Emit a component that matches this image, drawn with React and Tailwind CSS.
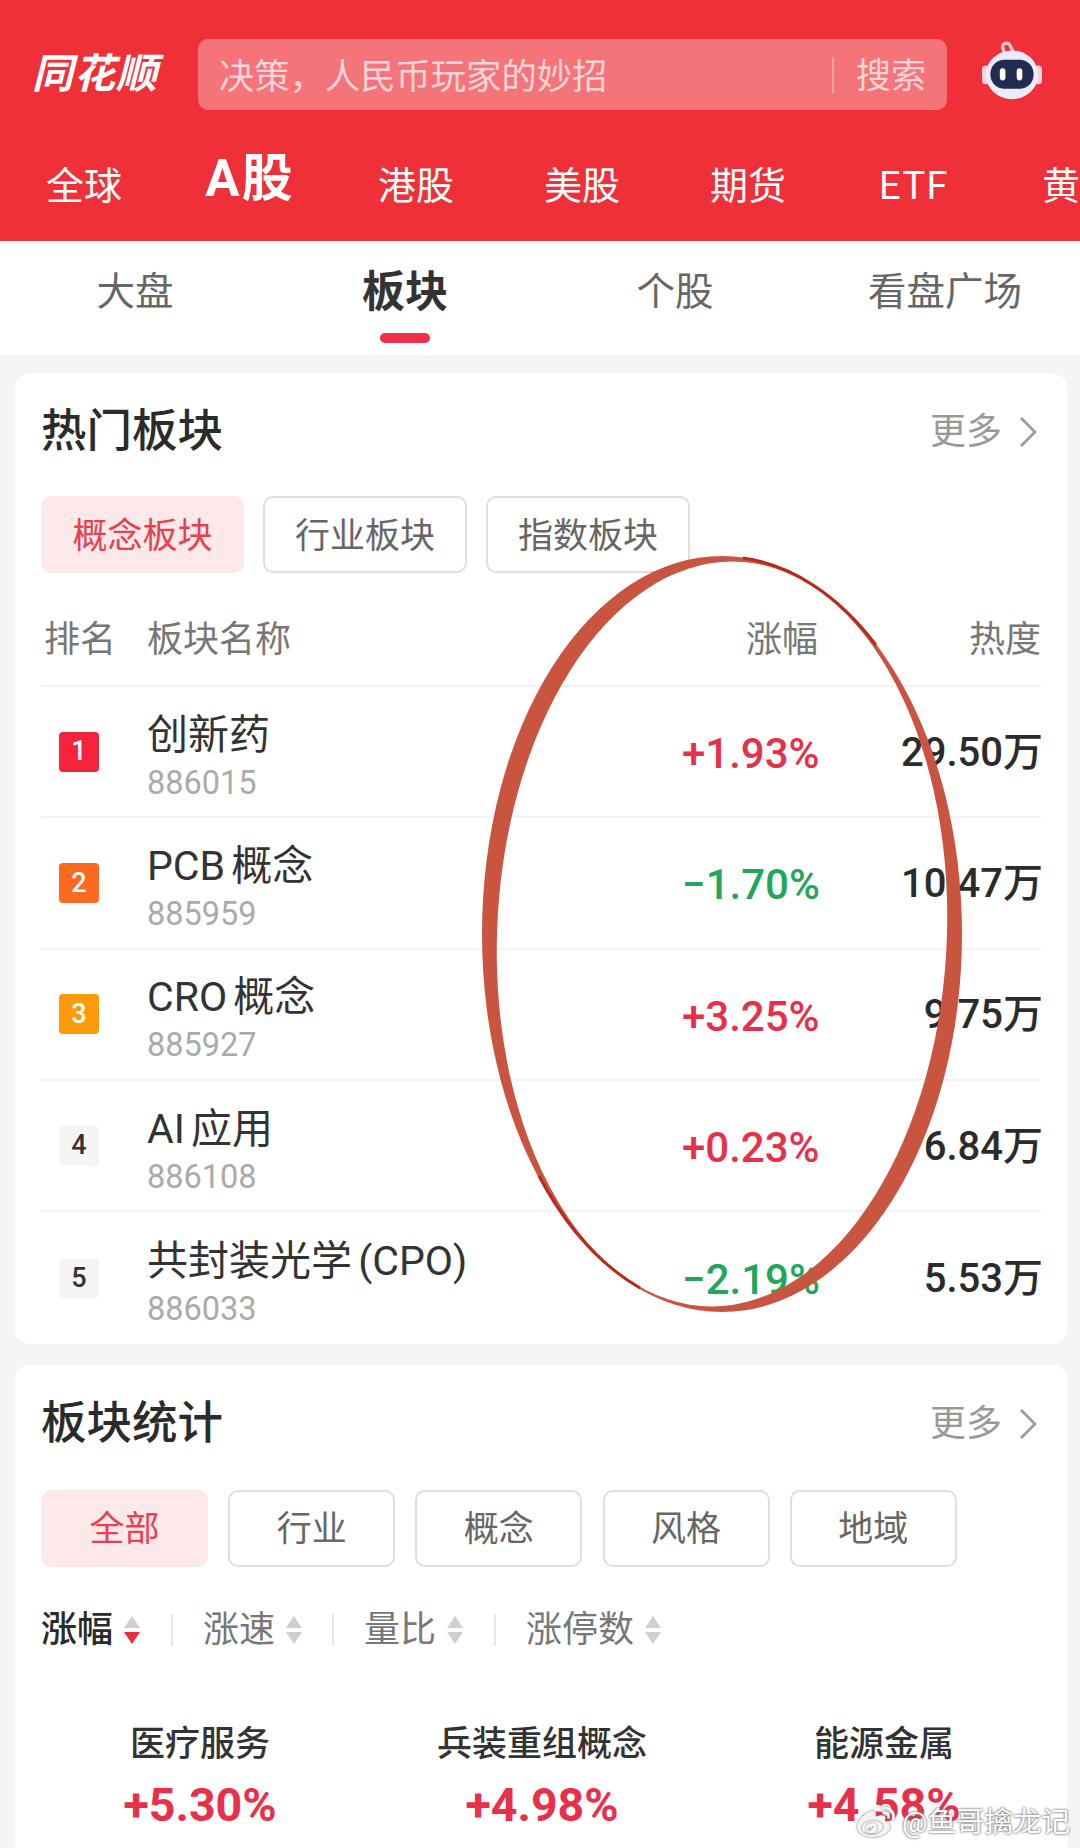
import React from "react";
import { FaWeibo } from "react-icons/fa";

const nav = [["全球",0],["A股",1],["港股",0],["美股",0],["期货",0],["ETF",0],["黄金",0]];
const tabs = [["大盘",0],["板块",1],["个股",0],["看盘广场",0]];
const rows = [
  ["1","创新药","886015","+1.93%","29.50万","bg-[#f5243a] text-white",1],
  ["2","PCB 概念","885959","−1.70%","10.47万","bg-[#fb6a1e] text-white",0],
  ["3","CRO 概念","885927","+3.25%","9.75万","bg-[#ff9b0a] text-white",1],
  ["4","AI 应用","886108","+0.23%","6.84万","bg-[#f5f5f5] text-[#333]",1],
  ["5","共封装光学 (CPO)","886033","−2.19%","5.53万","bg-[#f5f5f5] text-[#333]",0],
];

function More() {
  return (
    <div className="flex items-center pr-[3px] text-[36px] text-[#999] leading-none">
      <span>更多</span>
      <svg className="ml-[16px]" width="20" height="32" viewBox="0 0 20 32" fill="none" stroke="#999" strokeWidth="2.6">
        <path d="M3 2 L17 16 L3 30" />
      </svg>
    </div>
  );
}

function Pill({ children, active, w, shift }) {
  return (
    <div className={`h-[77px] rounded-[10px] flex items-center justify-center text-[35px] ${w} ${shift} ${active ? "bg-[#fde8ea] text-[#e8404f]" : "bg-white border-2 border-[#dedede] text-[#666]"}`}>
      {children}
    </div>
  );
}

function Sort({ active }) {
  return (
    <svg className="ml-[10px]" width="18" height="30" viewBox="0 0 18 30">
      <path d="M9 1 L17 13 L1 13 Z" fill="#cfcfcf" />
      <path d="M9 29 L17 17 L1 17 Z" fill={active ? "#ee2b3c" : "#cfcfcf"} />
    </svg>
  );
}

function Robot() {
  return (
    <svg width="62" height="60" viewBox="0 0 66 64">
      <path d="M24 10 C20 2 29 0 31 5 L34 11" fill="none" stroke="#f6c9cc" strokeWidth="3.5" strokeLinecap="round" />
      <rect x="1" y="26" width="8" height="20" rx="4" fill="#f3d3e0" />
      <rect x="57" y="26" width="8" height="20" rx="4" fill="#f3d3e0" />
      <ellipse cx="33" cy="36" rx="28" ry="26" fill="#ecebfa" />
      <rect x="10" y="20" width="46" height="31" rx="15" fill="#222b50" />
      <rect x="20" y="29" width="6" height="13" rx="3" fill="#fff" />
      <rect x="38" y="29" width="6" height="13" rx="3" fill="#fff" />
    </svg>
  );
}

export default function App() {
  return (
    <div className="relative w-[1080px] h-[1848px] overflow-hidden bg-[#f5f5f5] font-['Roboto','Noto_Sans_CJK_SC',sans-serif] text-[#333]">
      <header className="h-[241px] overflow-hidden bg-[#ef3038] text-white">
        <div className="flex items-center pt-[39px] h-[110px]">
          <div className="w-[198px] pl-[32px] text-[41px] font-bold italic leading-none tracking-[1px]">同花顺</div>
          <div className="w-[749px] h-[71px] rounded-[10px] bg-[#f5747a] flex items-center pl-[21px] pr-[21px] pt-[5px] text-[35.3px] text-[#fbd5d7]">
            <span className="flex-1">决策，人民币玩家的妙招</span>
            <span className="w-[2px] h-[36px] bg-[#f9a3a7] mr-[22px] -mt-[5px]"></span>
            <span className="text-[35px]">搜索</span>
          </div>
          <div className="ml-[34px] -mt-[8px]"><Robot /></div>
        </div>
        <nav className="flex pl-[1px] pt-[55px]">
          {nav.map(([t, a]) => (
            <div key={t} className={`w-[166px] shrink-0 text-center whitespace-nowrap leading-none ${a ? "text-[51px] font-bold tracking-[2px] -mt-[12px]" : t === "ETF" ? "text-[38px] tracking-[1.5px] pt-[2px]" : "text-[38px] pt-[2px]"}`}>{t}</div>
          ))}
        </nav>
      </header>

      <div className="h-[114px] bg-white flex">
        {tabs.map(([t, a]) => (
          <div key={t} className="w-[271px] flex flex-col items-center pt-[28px]">
            <span className={`leading-[46px] h-[46px] ${a ? "text-[43px] font-bold text-[#333]" : "text-[38.5px] text-[#666]"}`}>{t}</span>
            {a ? <span className="mt-[18px] w-[50px] h-[10px] rounded-[5px] bg-[#f0304a]"></span> : null}
          </div>
        ))}
      </div>

      <main className="pt-[19px] px-[15px]">
        <section className="bg-white rounded-[14px] w-[1052px] h-[970px] px-[26px]">
          <div className="flex items-center justify-between h-[122px] pb-[6px]">
            <h2 className="text-[45.5px] font-medium text-[#2b2b2b]">热门板块</h2>
            <More />
          </div>
          <div className="flex gap-[19px]">
            <Pill active w="w-[203px]" shift="pt-[6px]">概念板块</Pill>
            <Pill w="w-[204px]" shift="pt-[6px]">行业板块</Pill>
            <Pill w="w-[204px]" shift="pt-[6px]">指数板块</Pill>
          </div>
          <div className="flex items-center h-[114px] text-[36px] text-[#777] pt-[22px] border-b-2 border-[#f3f3f3]">
            <span className="w-[106px] pl-[3px]">排名</span>
            <span className="w-[569px]">板块名称</span>
            <span className="w-[102px] text-right">涨幅</span>
            <span className="w-[223px] text-right">热度</span>
          </div>
          {rows.map((r, i) => (
            <div key={r[0]} className={`flex items-center h-[131.3px] ${i < 4 ? "border-b-2 border-[#f3f3f3]" : ""}`}>
              <div className="w-[106px] pl-[18px]">
                <div className={`w-[40px] h-[40px] rounded-[4px] flex items-center justify-center text-[27px] font-medium ${r[5]}`}>{r[0]}</div>
              </div>
              <div className="w-[535px] flex flex-col pt-[8px]">
                <span className="text-[41px] leading-[50px] whitespace-nowrap [word-spacing:-4px]">{r[1]}</span>
                <span className="text-[32.5px] leading-[38px] mt-[4px] text-[#aaa]">{r[2]}</span>
              </div>
              <span className={`w-[136px] pt-[4px] text-right text-[42px] font-medium whitespace-nowrap ${r[6] ? "text-[#e8304a]" : "text-[#22a75a]"}`}>{r[3]}</span>
              <span className="w-[225px] -mr-[2px] pt-[2px] text-right text-[40px] font-medium whitespace-nowrap text-[#2b2b2b]">{r[4]}</span>
            </div>
          ))}
        </section>

        <section className="bg-white rounded-[14px] w-[1052px] h-[500px] mt-[21px] px-[26px]">
          <div className="flex items-center justify-between h-[125px] pb-[7px]">
            <h2 className="text-[45.5px] font-medium text-[#2b2b2b]">板块统计</h2>
            <More />
          </div>
          <div className="flex gap-[20.2px]">
            <Pill active w="w-[167px]" shift="pt-[4px]">全部</Pill>
            <Pill w="w-[167px]" shift="pt-[4px]">行业</Pill>
            <Pill w="w-[167px]" shift="pt-[4px]">概念</Pill>
            <Pill w="w-[167px]" shift="pt-[4px]">风格</Pill>
            <Pill w="w-[167px]" shift="pt-[4px]">地域</Pill>
          </div>
          <div className="flex items-center h-[38px] mt-[44px] text-[36px] text-[#777]">
            <span className="font-medium text-[#2b2b2b]">涨幅</span><Sort active />
            <span className="w-[2px] h-[32px] bg-[#e8e8e8] ml-[30px] mr-[30px]"></span>
            <span>涨速</span><Sort />
            <span className="w-[2px] h-[32px] bg-[#e8e8e8] ml-[29px] mr-[30px]"></span>
            <span>量比</span><Sort />
            <span className="w-[2px] h-[32px] bg-[#e8e8e8] ml-[30px] mr-[30px]"></span>
            <span>涨停数</span><Sort />
          </div>
          <div className="grid grid-cols-[342px_342px_342px] -ml-[12px] mt-[76px] text-center">
            {[["医疗服务","+5.30%"],["兵装重组概念","+4.98%"],["能源金属","+4.58%"]].map(([n, v]) => (
              <div key={n} className="flex flex-col">
                <span className="text-[35px] leading-[40px] font-medium text-[#333]">{n}</span>
                <span className="text-[46.5px] leading-[48px] mt-[16px] font-bold text-[#e8304a]">{v}</span>
              </div>
            ))}
          </div>
        </section>
      </main>

      <svg className="absolute left-[470px] top-[545px] pointer-events-none" width="510" height="780" viewBox="0 0 510 780">
        <path fillRule="evenodd" fill="#c95541"
          d="M12 389 A 240 378 0 1 1 492 389 A 240 378 0 1 1 12 389 Z M27 389 A 224 371 2.5 1 0 477 389 A 224 371 2.5 1 0 27 389 Z" />
        <path d="M273 13 A 239.5 377 0 0 1 406 100" fill="none" stroke="#b52c1b" strokeWidth="3" />
        <path d="M170 743 A 239.5 377 0 0 1 69 631" fill="none" stroke="#b52c1b" strokeWidth="3" />
      </svg>

      <div className="absolute left-[857px] top-[1804px] flex items-center text-white text-[28.5px] leading-none [text-shadow:0_0_3px_#777,0_0_2px_#777]">
        <FaWeibo className="text-[#f4f4f4] drop-shadow-[0_0_1px_#666]" size={38} />
        <span className="ml-[7px] whitespace-nowrap">@鱼哥擒龙记</span>
      </div>
    </div>
  );
}
